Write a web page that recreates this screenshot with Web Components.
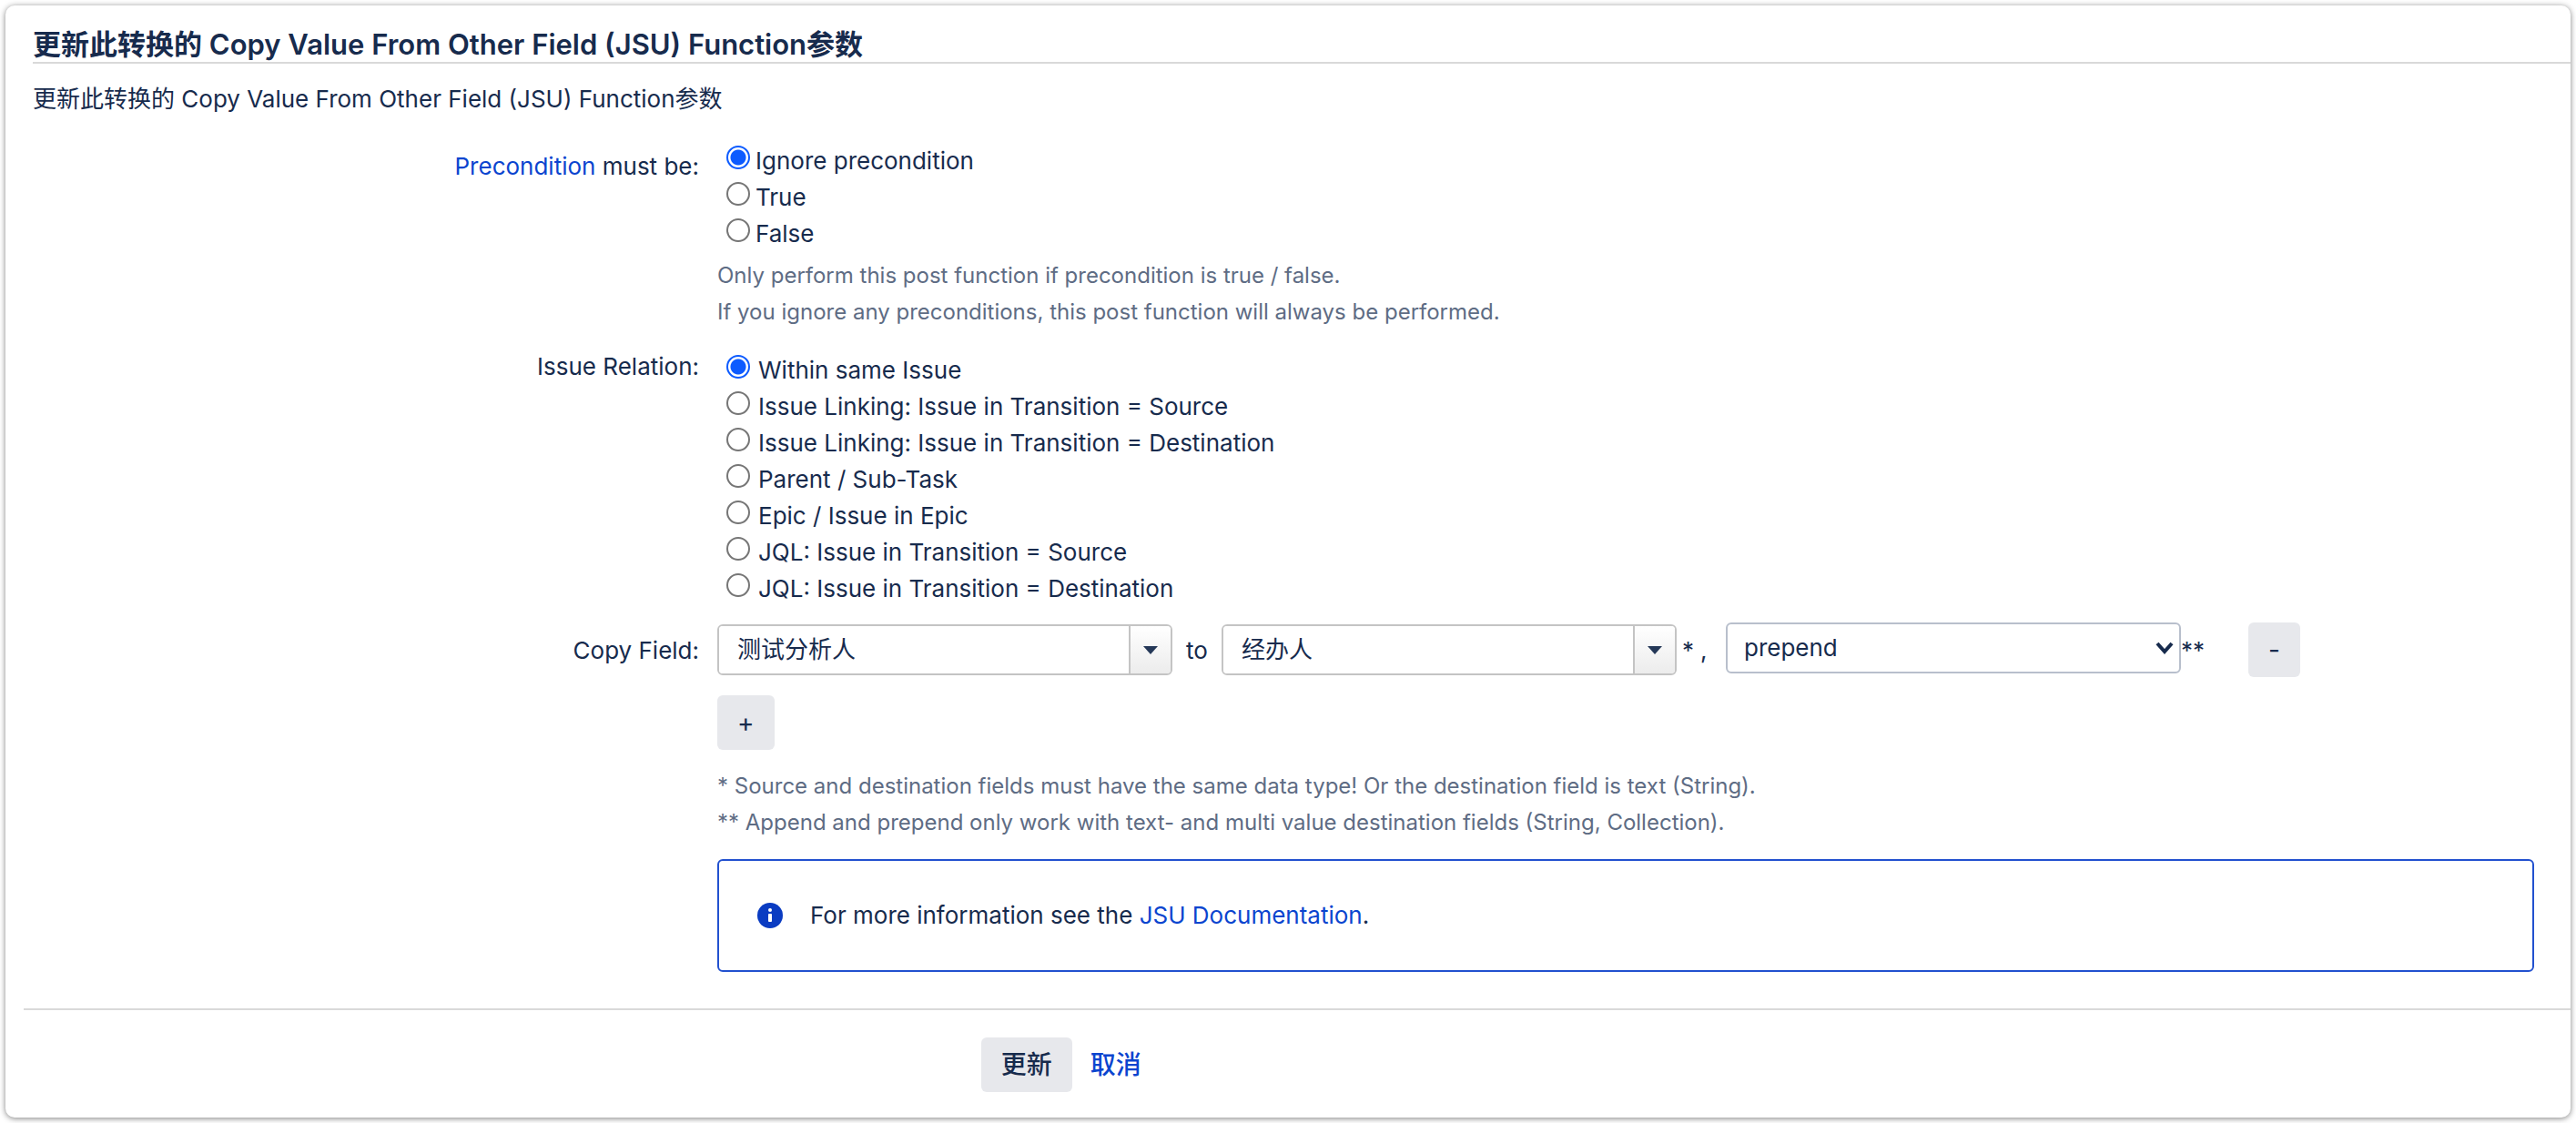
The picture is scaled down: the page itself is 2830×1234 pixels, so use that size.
<!DOCTYPE html>
<html lang="zh">
<head>
<meta charset="utf-8">
<title>Copy Value From Other Field (JSU)</title>
<style>
  body {
    margin: 0;
    padding: 6px;
    background: #fff;
    color: #172b4d;
    font: 400 26px/40px Inter, "Noto Sans CJK SC", sans-serif;
    --label-width: 732px;
    --col-gap: 20px;
    --link: #0b45cf;
    --muted: #5e6c84;
    --rule: #d9d9d9;
    --button: #e7e8ec;
  }
</style>
</head>
<body>
<jsu-card>
  <jsu-title>更新此转换的 Copy Value From Other Field (JSU) Function参数</jsu-title>
  <jsu-intro>更新此转换的 Copy Value From Other Field (JSU) Function参数</jsu-intro>
  <jsu-precondition></jsu-precondition>
  <jsu-relation></jsu-relation>
  <jsu-copy-field></jsu-copy-field>
  <jsu-message>For more information see the <jsu-link>JSU Documentation</jsu-link>.</jsu-message>
  <jsu-actions></jsu-actions>
</jsu-card>
<script>
const define = (name, html) => {
  const tpl = document.createElement('template');
  tpl.innerHTML = html;
  customElements.define(name, class extends HTMLElement {
    constructor() {
      super();
      this.attachShadow({ mode: 'open' }).append(tpl.content.cloneNode(true));
    }
  });
};

const rowCss = `
  :host { display: grid; grid-template-columns: var(--label-width) 1fr; column-gap: var(--col-gap); align-items: start; }
  .label { text-align: right; }
  p { margin: 0; color: var(--muted); font-size: 24px; }
`;

const radioCss = `
  .options { display: grid; padding-left: 10px; }
  .options label { display: flex; align-items: flex-start; gap: var(--radio-gap); }
  input { appearance: none; box-sizing: border-box; flex: none; width: 26px; height: 26px; margin: 3px 0 0;
    border: 2px solid #767676; border-radius: 50%; background: #fff; }
  input:checked { border-color: #0d5bff; background: radial-gradient(circle, #0d5bff 8px, #fff 9px); }
`;

const radios = (name, items) => items.map((text, i) =>
  `<label><input type="radio" name="${name}"${i ? '' : ' checked'}><span>${text}</span></label>`).join('');

const buttonCss = `
  button { height: 60px; border: 0; border-radius: 6px; background: var(--button); color: inherit; font: inherit; font-size: 28px; padding: 0 22px; }
`;

define('jsu-card', `<style>
  :host { display: block; padding: 24px 0 28px; border-radius: 10px; background: #fff; box-shadow: 0 1px 6px rgba(0,0,0,.5); }
</style><slot></slot>`);

define('jsu-title', `<style>
  :host { display: block; margin-left: 30px; border-bottom: 2px solid var(--rule); }
  h1 { margin: 0; font-size: 31px; line-height: 38px; font-weight: 600; }
</style><h1><slot></slot></h1>`);

define('jsu-intro', `<style>
  :host { display: block; margin: 19px 30px 28px; }
</style><slot></slot>`);

define('jsu-link', `<style>
  :host { display: inline; }
  a { color: var(--link); text-decoration: none; }
</style><a href="#"><slot></slot></a>`);

define('jsu-precondition', `<style>${rowCss}${radioCss}
  :host { margin: 0 40px 20px 30px; --radio-gap: 6px; }
  .label { padding-top: 6px; }
  p { margin-top: 6px; }
</style>
<div class="label" id="caption"><jsu-link>Precondition</jsu-link> must be:</div>
<div>
  <div class="options" role="radiogroup" aria-labelledby="caption">${radios('precondition', ['Ignore precondition', 'True', 'False'])}</div>
  <p>Only perform this post function if precondition is true / false.<br>If you ignore any preconditions, this post function will always be performed.</p>
</div>`);

define('jsu-relation', `<style>${rowCss}${radioCss}
  :host { margin: 0 40px 17px 30px; --radio-gap: 9px; }
  .options { padding-top: 4px; }
</style>
<div class="label" id="caption">Issue Relation:</div>
<div class="options" role="radiogroup" aria-labelledby="caption">${radios('relation', [
  'Within same Issue', 'Issue Linking: Issue in Transition = Source', 'Issue Linking: Issue in Transition = Destination',
  'Parent / Sub-Task', 'Epic / Issue in Epic', 'JQL: Issue in Transition = Source', 'JQL: Issue in Transition = Destination'])}</div>`);

const combo = (id, value, attrs = '') => `
  <div class="combo"><input id="${id}" type="text" role="combobox" aria-expanded="false" value="${value}"${attrs}>
  <button type="button" class="toggle" aria-label="Open"><svg width="16" height="9" viewBox="0 0 16 9"><path d="M0 0H16L8 9Z" fill="#253858"/></svg></button></div>`;

define('jsu-copy-field', `<style>${rowCss}${buttonCss}
  :host { margin: 0 40px 20px 30px; }
  .label { padding-top: 11px; }
  .row { display: flex; align-items: flex-start; }
  .combo { display: flex; box-sizing: border-box; width: 500px; height: 56px; margin-top: 2px; border: 2px solid #c4c4c4; border-radius: 6px; overflow: hidden; }
  .combo input { flex: 1; min-width: 0; box-sizing: border-box; border: 0; outline: 0; padding: 0 20px; background: #fff; color: inherit; font: inherit; }
  .combo .toggle { display: grid; place-items: center; width: 46px; height: 100%; padding: 0; border-left: 2px solid #c4c4c4; border-radius: 0; background: linear-gradient(#fff, #ececec); }
  .text { padding-top: 11px; }
  .to { width: 54px; text-align: center; }
  .comma { width: 48px; padding-left: 6px; display: flex; gap: 7px; }
  .pick { display: grid; align-items: center; }
  .pick > * { grid-area: 1 / 1; }
  select { appearance: none; box-sizing: border-box; width: 500px; height: 56px; padding: 0 18px; border: 2px solid #b8bfcc; border-radius: 6px; background: #fff; color: inherit; font: inherit; }
  .pick svg { justify-self: end; margin-right: 8px; pointer-events: none; }
  .stars { width: 74px; }
  .plus { display: block; margin: 20px 0; }
</style>
<label class="label" for="source">Copy Field:</label>
<div>
  <div class="row">
    ${combo('source', '测试分析人')}
    <span class="text to">to</span>
    ${combo('destination', '经办人', ' aria-label="Destination field"')}
    <span class="text comma"><span>*</span><span>,</span></span>
    <div class="pick"><select aria-label="Copy mode"><option>prepend</option></select>
      <svg width="20" height="14" viewBox="0 0 20 14" fill="none" stroke="#172b4d" stroke-width="4"><path d="M2 2L10 11L18 2"/></svg></div>
    <span class="text stars">**</span>
    <button type="button">-</button>
  </div>
  <button type="button" class="plus">+</button>
  <p>* Source and destination fields must have the same data type! Or the destination field is text (String).<br>** Append and prepend only work with text- and multi value destination fields (String, Collection).</p>
</div>`);

define('jsu-message', `<style>
  :host { display: flex; align-items: center; gap: 30px; margin: 0 40px 40px calc(30px + var(--label-width) + var(--col-gap));
    padding: 40px 42px; border: 2px solid #2251cf; border-radius: 6px; }
  svg { flex: none; }
</style>
<svg width="28" height="28" viewBox="0 0 28 28"><circle cx="14" cy="14" r="14" fill="#0a3cc2"/><circle cx="14" cy="8" r="2" fill="#fff"/><rect x="12" y="12" width="4" height="9" rx="1" fill="#fff"/></svg>
<div><slot></slot></div>`);

define('jsu-actions', `<style>${buttonCss}
  :host { display: flex; align-items: center; gap: 20px; margin-left: 20px; padding: 30px 0 0 calc(38% - 19px); border-top: 2px solid var(--rule); font-size: 28px; font-weight: 500; }
</style>
<button type="submit">更新</button><jsu-link>取消</jsu-link>`);
</script>
</body>
</html>
